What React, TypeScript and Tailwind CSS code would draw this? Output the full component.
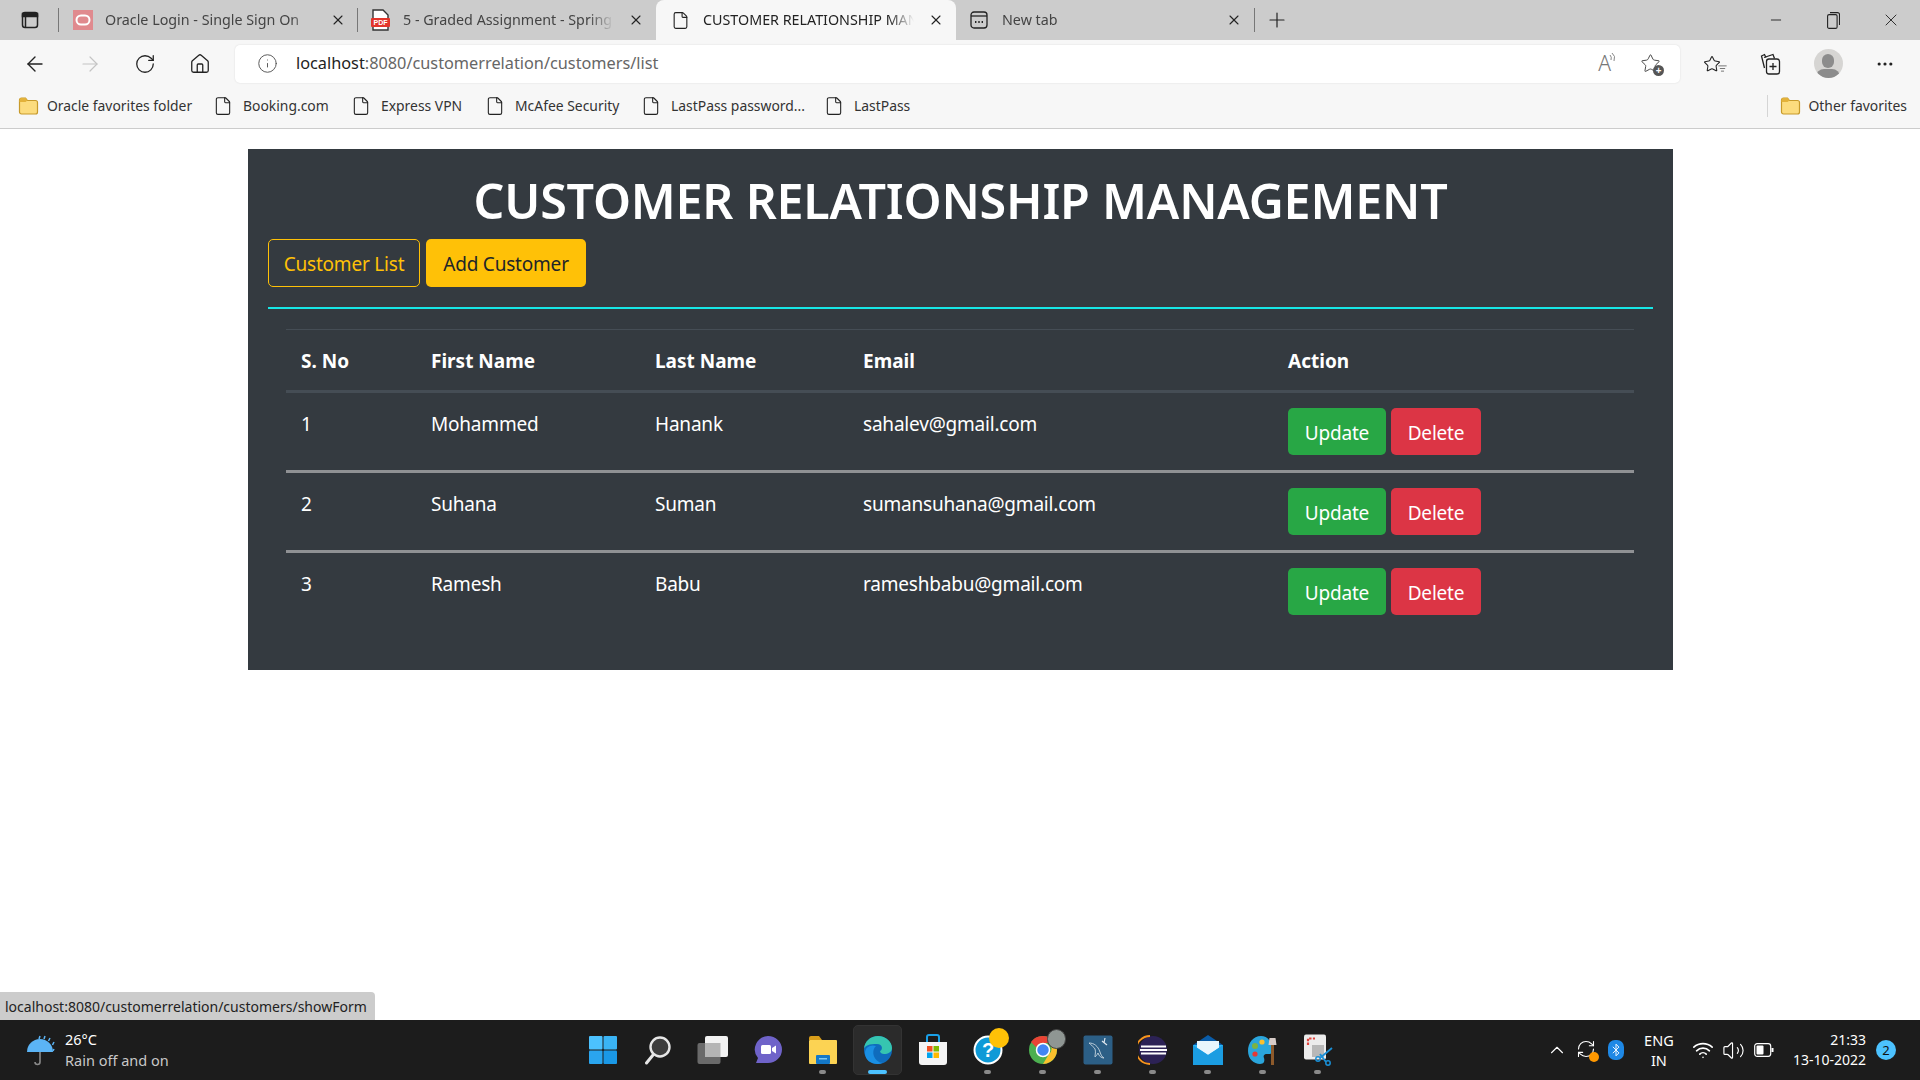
import { ArrowLeft, ArrowRight, RotateCw, RefreshCw, Home, Info, X, Plus, Minus, File, MoreHorizontal, ChevronUp, Wifi, Volume2, Bluetooth, Star, ListFilter } from "lucide-react"

const FONT = "font-['Noto_Sans','Open_Sans',sans-serif]"

const customers = [
  { id: 1, first: "Mohammed", last: "Hanank", email: "sahalev@gmail.com" },
  { id: 2, first: "Suhana", last: "Suman", email: "sumansuhana@gmail.com" },
  { id: 3, first: "Ramesh", last: "Babu", email: "rameshbabu@gmail.com" },
]

const bookmarks = [
  { label: "Booking.com", width: "w-[138px]" },
  { label: "Express VPN", width: "w-[134px]" },
  { label: "McAfee Security", width: "w-[156px]" },
  { label: "LastPass password...", width: "w-[183px]" },
  { label: "LastPass", width: "w-[100px]" },
]

function FolderIcon() {
  return (
    <svg width="21" height="20" viewBox="0 0 21 20" className="shrink-0">
      <path d="M1.5 4a2 2 0 0 1 2-2h4l2 2.5h8a2 2 0 0 1 2 2V16a2 2 0 0 1-2 2h-14a2 2 0 0 1-2-2z" fill="#fcdc7e" stroke="#c79a2b" strokeWidth="1.2" />
      <path d="M1.5 4a2 2 0 0 1 2-2h4l2 2.5-2 1.5h-6z" fill="#e3b23a" />
    </svg>
  )
}

function OracleIcon() {
  return (
    <svg width="20" height="20" viewBox="0 0 20 20" className="shrink-0">
      <rect width="20" height="20" fill="#e08a8e" />
      <rect x="3.5" y="5.5" width="13" height="9" rx="4.5" fill="none" stroke="#fff" strokeWidth="2" />
    </svg>
  )
}

function PdfIcon() {
  return (
    <svg width="19" height="22" viewBox="0 0 19 22" className="shrink-0">
      <path d="M2 1h10l5 5v15H2z" fill="#fff" stroke="#333" strokeWidth="1.4" />
      <rect x="0" y="9" width="19" height="9" rx="1" fill="#e2352b" />
      <text x="9.5" y="16" textAnchor="middle" fontSize="7" fontWeight="700" fill="#fff" fontFamily="Liberation Sans">PDF</text>
    </svg>
  )
}

function NewTabIcon() {
  return (
    <svg width="18" height="18" viewBox="0 0 18 18" fill="none" stroke="#222" strokeWidth="1.3" className="shrink-0">
      <rect x="1" y="1" width="16" height="16" rx="3" />
      <path d="M1 5h16" />
      <path d="M5 11h1.4M8.3 11h1.4M11.6 11H13" strokeWidth="1.8" />
    </svg>
  )
}

function Tab({ icon, label, active, width, pad }: { icon: React.ReactNode; label: string; active?: boolean; width: string; pad: string }) {
  return (
    <div className={`${width} ${pad} h-[40px] flex items-center shrink-0 pr-[12px] ${active ? "bg-[#f7f7f7] rounded-t-[8px]" : ""}`}>
      <div className="w-[32px] shrink-0 flex items-center">{icon}</div>
      <span className={`flex-1 min-w-0 overflow-hidden whitespace-nowrap text-[14.3px] ${active ? "text-[#222]" : "text-[#444]"} [mask-image:linear-gradient(to_right,black_88%,transparent)]`}>
        {label}
      </span>
      <X size={16} strokeWidth={1.6} className="ml-[14px] text-[#222] shrink-0" />
    </div>
  )
}

function TabBar() {
  return (
    <div className="h-[40px] bg-[#cccccc] flex items-center shrink-0">
      <div className="w-[59px] h-[24px] flex items-center justify-center shrink-0 border-r border-[#777] pl-[2px]">
        <svg width="18" height="18" viewBox="0 0 18 18" fill="none" stroke="#222" strokeWidth="1.5">
          <rect x="1.5" y="1.5" width="15" height="15" rx="2.5" />
          <path d="M1.5 2.5h15v3h-15z" fill="#222" />
          <path d="M4.5 5v11" />
        </svg>
      </div>
      <Tab icon={<OracleIcon />} label="Oracle Login - Single Sign On" width="w-[299px]" pad="pl-[14px]" />
      <div className="w-px h-[24px] bg-[#777] shrink-0 -ml-px" />
      <Tab icon={<PdfIcon />} label="5 - Graded Assignment - Spring Boot" width="w-[298px]" pad="pl-[13px]" />
      <Tab icon={<File size={19} strokeWidth={1.4} className="text-[#222]" />} label="CUSTOMER RELATIONSHIP MANAGEMENT" active width="w-[300px]" pad="pl-[15px]" />
      <Tab icon={<NewTabIcon />} label="New tab" width="w-[298px]" pad="pl-[14px]" />
      <div className="w-px h-[24px] bg-[#777] shrink-0" />
      <div className="w-[44px] flex justify-center shrink-0">
        <Plus size={24} strokeWidth={1.2} className="text-[#222]" />
      </div>
      <div className="flex-1" />
      <div className="flex items-center shrink-0 text-[#222]">
        <div className="w-[57px] flex justify-center"><Minus size={16} strokeWidth={1.4} /></div>
        <div className="w-[58px] flex justify-center">
          <svg width="13" height="17" viewBox="0 0 13 17" fill="none" stroke="#222" strokeWidth="1.1">
            <rect x="0.6" y="2.6" width="9.500" height="13.800" rx="1.500" />
            <path d="M3 .6h7.500a2 2 0 0 1 2 2v10.500" />
          </svg>
        </div>
        <div className="w-[58px] flex justify-center"><X size={20} strokeWidth={1.1} /></div>
      </div>
    </div>
  )
}

function Toolbar() {
  return (
    <div className="h-[45px] bg-[#f7f7f7] flex items-center shrink-0 pt-[2px]">
      <div className="w-[235px] flex items-center shrink-0 pl-[23px]">
        <div className="w-[55px]"><ArrowLeft size={24} strokeWidth={1.4} className="text-[#222]" /></div>
        <div className="w-[56px]"><ArrowRight size={24} strokeWidth={1.2} className="text-[#c4c4c4]" /></div>
        <div className="w-[55px]"><RotateCw size={22} strokeWidth={1.4} className="text-[#222]" /></div>
        <div className="w-[40px]"><Home size={22} strokeWidth={1.4} className="text-[#222]" /></div>
      </div>
      <div className="w-[1445px] h-[38px] bg-white rounded-[5px] shadow-[0_0_2px_rgba(0,0,0,0.12)] flex items-center shrink-0">
        <Info size={21} strokeWidth={1.1} className="ml-[22px] text-[#555]" />
        <span className="ml-[18px] text-[16.3px] text-[#222]">localhost<span className="text-[#666]">:8080/customerrelation/customers/list</span></span>
        <div className="flex-1" />
        <span className="text-[#777] text-[21px] font-light mr-[-2px]">A</span>
        <svg width="10" height="14" viewBox="0 0 10 14" fill="none" stroke="#777" strokeWidth="0.9" className="mb-[10px]">
          <path d="M1 3q2 2 1 5M3 1q4 3 2 8" />
        </svg>
        <div className="relative ml-[21px] mr-[18px] w-[22px] h-[22px]">
          <Star size={21} strokeWidth={1.1} className="text-[#444]" />
          <span className="absolute right-[-2px] bottom-[-1px] w-[11px] h-[11px] rounded-full bg-[#555] text-white text-[10px] leading-[11px] text-center font-bold">+</span>
        </div>
      </div>
      <div className="flex-1 flex items-center text-[#222]">
        <div className="w-[70px] flex justify-center">
          <div className="relative w-[24px] h-[24px]">
            <Star size={18} strokeWidth={1.4} className="mt-[3px]" />
            <ListFilter size={9} strokeWidth={1.6} className="absolute right-0 bottom-[3px] bg-[#f7f7f7]" />
          </div>
        </div>
        <div className="w-[40px] flex justify-center">
          <svg width="21" height="22" viewBox="0 0 21 22" fill="none" stroke="#222" strokeWidth="1.3">
            <path d="M6 4.500 4.500 1.500 1.500 3l3 12" />
            <path d="M4 4.500 13 1.500l1.500 4" />
            <rect x="6.500" y="6" width="13" height="15" rx="2.500" fill="#f7f7f7" />
            <path d="M13 10v7M9.500 13.500h7" />
          </svg>
        </div>
        <div className="w-[76px] flex justify-center">
          <div className="w-[29px] h-[29px] rounded-full bg-[#d6d5d3] overflow-hidden flex flex-col items-center">
            <div className="w-[12px] h-[14px] mt-[5px] rounded-full bg-[#8c8c8c] shrink-0" />
            <div className="w-[24px] h-[16px] mt-[1px] rounded-full bg-[#8c8c8c] shrink-0" />
          </div>
        </div>
        <div className="w-[38px] flex justify-center"><MoreHorizontal size={20} strokeWidth={1.8} /></div>
      </div>
    </div>
  )
}

function Bookmark({ label, width }: { label: string; width: string }) {
  return (
    <div className={`${width} flex items-center shrink-0`}>
      <File size={20} strokeWidth={1.3} className="text-[#222] shrink-0" />
      <span className="ml-[10px] text-[13.9px] text-[#333] whitespace-nowrap">{label}</span>
    </div>
  )
}

function BookmarksBar() {
  return (
    <div className="h-[44px] bg-[#f7f7f7] border-b border-[#cccccc] flex items-center shrink-0 pl-[18px] pb-[1px]">
      <div className="w-[195px] flex items-center shrink-0">
        <FolderIcon />
        <span className="ml-[8px] text-[13.9px] text-[#333] whitespace-nowrap">Oracle favorites folder</span>
      </div>
      {bookmarks.map((b) => (
        <Bookmark key={b.label} label={b.label} width={b.width} />
      ))}
      <div className="flex-1" />
      <div className="w-px h-[22px] bg-[#d5d5d5] mr-[12px]" />
      <FolderIcon />
      <span className="ml-[8px] mr-[13px] text-[13.9px] text-[#333] whitespace-nowrap">Other favorites</span>
    </div>
  )
}

function ActionButton({ label, className }: { label: string; className: string }) {
  return (
    <button className={`h-[47px] pt-[2px] rounded-[5px] text-white text-[19px] tracking-[-0.2px] ${className}`}>{label}</button>
  )
}

function CustomerPanel() {
  return (
    <div className="w-[1425px] h-[521px] mt-[20px] mx-[248px] bg-[#343a40] px-[20px] text-white shrink-0">
      <h1 className="h-[90px] text-center text-[48.4px] leading-[102px] font-semibold tracking-[-0.2px]">CUSTOMER RELATIONSHIP MANAGEMENT</h1>
      <div className="flex gap-[6px]">
        <button className="w-[152px] h-[48px] pt-[2px] rounded-[5px] border border-[#ffc107] text-[#ffc107] text-[19px] tracking-[-0.2px]">Customer List</button>
        <button className="w-[160px] h-[48px] pt-[2px] rounded-[5px] bg-[#ffc107] text-[#212529] text-[19px] tracking-[-0.2px]">Add Customer</button>
      </div>
      <div className="h-[2px] bg-[#17e6e6] mt-[20px]" />
      <table className="w-[1348px] mx-[18px] mt-[20px] table-fixed border-collapse">
        <colgroup>
          <col className="w-[130px]" />
          <col className="w-[224px]" />
          <col className="w-[208px]" />
          <col className="w-[425px]" />
          <col />
        </colgroup>
        <thead>
          <tr className="h-[62px] border-t border-t-[#454d55] border-b-[3px] border-b-[#454d55] text-[19px] font-semibold text-left">
            <th className="px-[15px] pt-[2px]">S. No</th>
            <th className="px-[15px] pt-[2px]">First Name</th>
            <th className="px-[15px] pt-[2px]">Last Name</th>
            <th className="px-[15px] pt-[2px]">Email</th>
            <th className="px-[15px] pt-[2px]">Action</th>
          </tr>
        </thead>
        <tbody className="text-[19px] tracking-[-0.2px]">
          {customers.map((c, i) => (
            <tr key={c.id} className={i < customers.length - 1 ? "h-[80px] border-b-[3px] border-b-[#8f9194]" : "h-[77px]"}>
              <td className="px-[15px] pt-[16px] align-top leading-[30px]">{c.id}</td>
              <td className="px-[15px] pt-[16px] align-top leading-[30px]">{c.first}</td>
              <td className="px-[15px] pt-[16px] align-top leading-[30px]">{c.last}</td>
              <td className="px-[15px] pt-[16px] align-top leading-[30px]">{c.email}</td>
              <td className="px-[15px] pt-[15px] align-top leading-[30px]">
                <div className="flex gap-[5px]">
                  <ActionButton label="Update" className="w-[98px] bg-[#28a745]" />
                  <ActionButton label="Delete" className="w-[90px] bg-[#dc3545]" />
                </div>
              </td>
            </tr>
          ))}
        </tbody>
      </table>
    </div>
  )
}

function TaskSlot({ children, dot, active }: { children: React.ReactNode; dot?: boolean; active?: boolean }) {
  return (
    <div className="relative w-[55px] h-[60px] flex items-center justify-center">
      {active && <div className="absolute left-[3px] right-[3px] top-[5px] bottom-[5px] rounded-[5px] bg-[#2b2b2b] border border-[#333]" />}
      <div className="relative">{children}</div>
      {dot && <div className="absolute bottom-[6px] left-[24px] w-[7px] h-[4px] rounded-full bg-[#8a8a8a]" />}
      {active && <div className="absolute bottom-[6px] left-[18px] w-[19px] h-[4px] rounded-full bg-[#4cc2ff]" />}
    </div>
  )
}

function TaskbarIcons() {
  return (
    <div className="flex shrink-0">
      {/* start */}
      <TaskSlot>
        <svg width="30" height="30" viewBox="0 0 30 30">
          <rect x="1" y="1" width="13.5" height="13.5" rx="1" fill="#4cc2ff" />
          <rect x="15.5" y="1" width="13.5" height="13.5" rx="1" fill="#3ab4f5" />
          <rect x="1" y="15.5" width="13.5" height="13.5" rx="1" fill="#2aa5ee" />
          <rect x="15.5" y="15.5" width="13.5" height="13.5" rx="1" fill="#1a98e6" />
        </svg>
      </TaskSlot>
      {/* search */}
      <TaskSlot>
        <svg width="28" height="30" viewBox="0 0 28 30" fill="none">
          <circle cx="16" cy="12" r="9.5" fill="#3c3c3c" stroke="#e6e6e6" strokeWidth="2.4" />
          <path d="M9 20 2.500 28" stroke="#e6e6e6" strokeWidth="3" strokeLinecap="round" />
        </svg>
      </TaskSlot>
      {/* task view */}
      <TaskSlot>
        <svg width="32" height="30" viewBox="0 0 32 30">
          <rect x="0.5" y="8" width="23" height="21" rx="2" fill="#6a6a6a" />
          <rect x="8" y="1" width="23" height="21" rx="2" fill="#f2f2f2" />
          <rect x="8" y="8" width="15.5" height="14" fill="#b5b5b5" />
        </svg>
      </TaskSlot>
      {/* teams chat */}
      <TaskSlot>
        <svg width="30" height="30" viewBox="0 0 30 30">
          <path d="M15 1a14 13.5 0 0 1 0 27H3l2-5A14 13.5 0 0 1 15 1z" fill="#6f63c9" />
          <rect x="8" y="10" width="10" height="9" rx="1.5" fill="#fff" />
          <path d="m19 13 4-2.500v8L19 16z" fill="#fff" />
        </svg>
      </TaskSlot>
      {/* explorer */}
      <TaskSlot dot>
        <svg width="30" height="30" viewBox="0 0 30 30">
          <path d="M1 3a2 2 0 0 1 2-2h8l3 4H1z" fill="#d99e1a" />
          <rect x="1" y="5" width="28" height="24" rx="1" fill="#fcd353" />
          <rect x="8" y="20" width="14" height="9" rx="1" fill="#1478c8" />
          <rect x="11" y="23" width="8" height="1.5" fill="#7cc8f5" />
        </svg>
      </TaskSlot>
      {/* edge */}
      <TaskSlot active>
        <svg width="30" height="30" viewBox="0 0 30 30">
          <circle cx="15" cy="15" r="14" fill="#0f6cbd" />
          <path d="M1 15C1 6 8 1 15 1c8 0 14 6 14 12 0 4-4 6-8 6-2 0-4-1-4-3 3-1 3-7-3-7-7 0-13 1-13 6z" fill="#36c5b0" />
          <path d="M2 18c0-6 6-9 11-7-4 3-4 12 3 16 1 1 3 1 4 0-2 2-4 2-6 2C8 29 2 25 2 18z" fill="#1a8fe3" />
        </svg>
      </TaskSlot>
      {/* store */}
      <TaskSlot>
        <svg width="30" height="32" viewBox="0 0 30 32">
          <path d="M9 8V3a2 2 0 0 1 2-2h8a2 2 0 0 1 2 2v5" fill="none" stroke="#1aa0e8" strokeWidth="2" />
          <path d="M1 8h28v20a3 3 0 0 1-3 3H4a3 3 0 0 1-3-3z" fill="#f4f4f4" />
          <rect x="9" y="12" width="5.5" height="5.5" fill="#f25022" />
          <rect x="15.5" y="12" width="5.5" height="5.5" fill="#7fba00" />
          <rect x="9" y="18.5" width="5.5" height="5.5" fill="#00a4ef" />
          <rect x="15.5" y="18.5" width="5.5" height="5.5" fill="#ffb900" />
        </svg>
      </TaskSlot>
      {/* help with badge */}
      <TaskSlot dot>
        <div className="relative w-[30px] h-[30px]">
          <svg width="30" height="30" viewBox="0 0 30 30">
            <circle cx="15" cy="15" r="13.5" fill="#0e9ad7" stroke="#fff" strokeWidth="2" />
            <text x="15" y="22" textAnchor="middle" fontSize="20" fontWeight="700" fill="#fff" fontFamily="Liberation Sans">?</text>
          </svg>
          <span className="absolute top-[-7px] right-[-6px] w-[20px] h-[20px] rounded-full bg-[#ffc107]" />
        </div>
      </TaskSlot>
      {/* chrome */}
      <TaskSlot dot>
        <div className="relative w-[30px] h-[30px]">
          <svg width="30" height="30" viewBox="0 0 30 30">
            <circle cx="15" cy="15" r="14" fill="#4caf50" />
            <path d="M15 1a14 14 0 0 1 12.100 7H15a7 7 0 0 0-6.500 4.500L3 7a14 14 0 0 1 12-6z" fill="#ea4335" />
            <path d="M27.100 8A14 14 0 0 1 15 29l6-10a7 7 0 0 0 0-11z" fill="#fbc02d" />
            <circle cx="15" cy="15" r="6.500" fill="#4285f4" stroke="#fff" strokeWidth="1.5" />
          </svg>
          <span className="absolute top-[-6px] right-[-8px] w-[19px] h-[20px] rounded-full bg-[#8f9693] border border-[#444]" />
        </div>
      </TaskSlot>
      {/* mysql */}
      <TaskSlot dot>
        <svg width="30" height="30" viewBox="0 0 30 30">
          <rect x="0.5" y="0.5" width="29" height="29" rx="2" fill="#2c5f86" />
          <path d="M6 8c5 0 9 3 11 9 1 3 2 5 4 6-3 0-5-2-6-5-1 2-2 3-3 4 0-3 1-5 0-8-1-2-4-4-6-6z" fill="none" stroke="#c7d6e0" strokeWidth="0.9" />
          <path d="m19 6 5 4M22 3l-1 5" stroke="#dfe7ee" strokeWidth="1.2" />
        </svg>
      </TaskSlot>
      {/* eclipse */}
      <TaskSlot dot>
        <svg width="30" height="30" viewBox="0 0 30 30">
          <circle cx="15" cy="15" r="14" fill="#2c2255" />
          <path d="M12 1a14 14 0 0 0 0 28" fill="none" stroke="#f7941e" strokeWidth="1.8" />
          <rect x="3" y="10.5" width="25" height="2" fill="#fff" />
          <rect x="2" y="14" width="27" height="2" fill="#fff" />
          <rect x="3" y="17.5" width="25" height="2" fill="#fff" />
        </svg>
      </TaskSlot>
      {/* mail */}
      <TaskSlot dot>
        <svg width="30" height="30" viewBox="0 0 30 30">
          <path d="M0 10 15 0l15 10v4H0z" fill="#0a5ca8" />
          <rect y="10" width="30" height="20" fill="#29b6f6" />
          <path d="M4 6h22v7l-11 7-11-7z" fill="#e8f6fd" />
          <path d="M0 10 15 20 30 10v20H0z" fill="#1b9de2" />
        </svg>
      </TaskSlot>
      {/* paint */}
      <TaskSlot dot>
        <svg width="30" height="32" viewBox="0 0 30 32">
          <path d="M13 2C5 2 0 9 0 17s6 13 12 13c4 0 5-3 4-6-1-2 0-4 3-4h3c1 0 2-2 2-4C24 8 20 2 13 2z" fill="#2aa5dc" />
          <circle cx="7" cy="12" r="3" fill="#7cb342" />
          <circle cx="14" cy="8" r="2.6" fill="#fbc02d" />
          <circle cx="7" cy="20" r="2.6" fill="#e53935" />
          <rect x="23" y="10" width="3" height="21" fill="#8d5a2b" />
          <path d="M21.500 4h6l1 7h-8z" fill="#d7ccc8" />
        </svg>
      </TaskSlot>
      {/* snipping */}
      <TaskSlot dot>
        <svg width="30" height="32" viewBox="0 0 30 32">
          <rect x="1" y="0.5" width="22" height="25" rx="2" fill="#ececec" />
          <path d="M5 11V4.500h7" fill="none" stroke="#e0433c" strokeWidth="2.2" strokeDasharray="2.4 1.4" />
          <rect x="9" y="11" width="12" height="12" fill="#b8b8b8" />
          <path d="m29 14-12 10" stroke="#1a8fd6" strokeWidth="1.8" />
          <path d="m17 20 6 8" stroke="#1a8fd6" strokeWidth="1.8" />
          <circle cx="25" cy="29" r="2.2" fill="none" stroke="#1a8fd6" strokeWidth="1.5" />
          <circle cx="15" cy="25" r="2.2" fill="none" stroke="#1a8fd6" strokeWidth="1.5" />
        </svg>
      </TaskSlot>
    </div>
  )
}

function Tray() {
  return (
    <div className="flex-1 flex items-center justify-end text-white pr-[24px]">
      <ChevronUp size={22} strokeWidth={1.2} className="mr-[8px]" />
      <div className="relative w-[22px] h-[22px] mr-[10px]">
        <RefreshCw size={20} strokeWidth={1.3} />
        <span className="absolute right-[-1px] bottom-[-1px] w-[10px] h-[10px] rounded-full bg-[#ff9800]" />
      </div>
      <div className="w-[16px] h-[20px] rounded-[7px] bg-[#1e88e5] flex items-center justify-center mr-[13px]">
        <Bluetooth size={14} strokeWidth={1.6} />
      </div>
      <div className="w-[44px] text-center text-[14.5px] leading-[20px] mr-[11px]">
        <div>ENG</div>
        <div>IN</div>
      </div>
      <Wifi size={22} strokeWidth={1.8} className="mr-[8px]" />
      <Volume2 size={23} strokeWidth={1.2} className="mr-[9px]" />
      <svg width="20" height="14" viewBox="0 0 20 14" className="mr-[19px]" fill="none">
        <rect x="0.7" y="0.7" width="16" height="12.6" rx="2.5" stroke="#fff" strokeWidth="1.2" />
        <rect x="2.5" y="2.5" width="7" height="9" rx="1" fill="#fff" />
        <rect x="17.5" y="5" width="2" height="4" fill="#fff" />
      </svg>
      <div className="text-right text-[14px] leading-[20px]">
        <div>21:33</div>
        <div>13-10-2022</div>
      </div>
      <div className="w-[20px] h-[20px] ml-[10px] rounded-full bg-[#4cc2ff] text-[#111] text-[13px] leading-[20px] text-center">2</div>
    </div>
  )
}

function Taskbar() {
  return (
    <div className="h-[60px] bg-[#1c1c1c] flex items-center shrink-0">
      <div className="w-[575px] flex items-center shrink-0 pl-[26px]">
        <svg width="30" height="32" viewBox="0 0 30 32" className="shrink-0">
          <path d="M1 18a13 13 0 0 1 26 0z" fill="#5bb4f5" />
          <path d="M14 18v10a2.500 2.500 0 0 1-5 0" fill="none" stroke="#8a8a8a" strokeWidth="1.6" />
          <path d="m14 2-1 3M19 2l-1 3M24 4l-1.500 3M28 8l-1.500 3M21 8l-1 2M28 15l-1 2" stroke="#5bb4f5" strokeWidth="1.5" />
        </svg>
        <div className="ml-[9px] text-[14.5px] leading-[21px] whitespace-nowrap">
          <div className="text-white">26°C</div>
          <div className="text-[#c8c8c8]">Rain off and on</div>
        </div>
      </div>
      <TaskbarIcons />
      <Tray />
    </div>
  )
}

export default function App() {
  return (
    <div className={`${FONT} relative h-screen w-full flex flex-col bg-white overflow-hidden`}>
      <TabBar />
      <Toolbar />
      <BookmarksBar />
      <div className="flex-1 min-h-0">
        <CustomerPanel />
      </div>
      <Taskbar />
      {/* hover url bubble */}
      <div className="absolute left-0 bottom-[60px] w-[375px] h-[28px] bg-[#cccccc] rounded-tr-[4px] px-[5px] text-[14px] leading-[29px] text-[#222] whitespace-nowrap">
        localhost:8080/customerrelation/customers/showForm
      </div>
    </div>
  )
}
